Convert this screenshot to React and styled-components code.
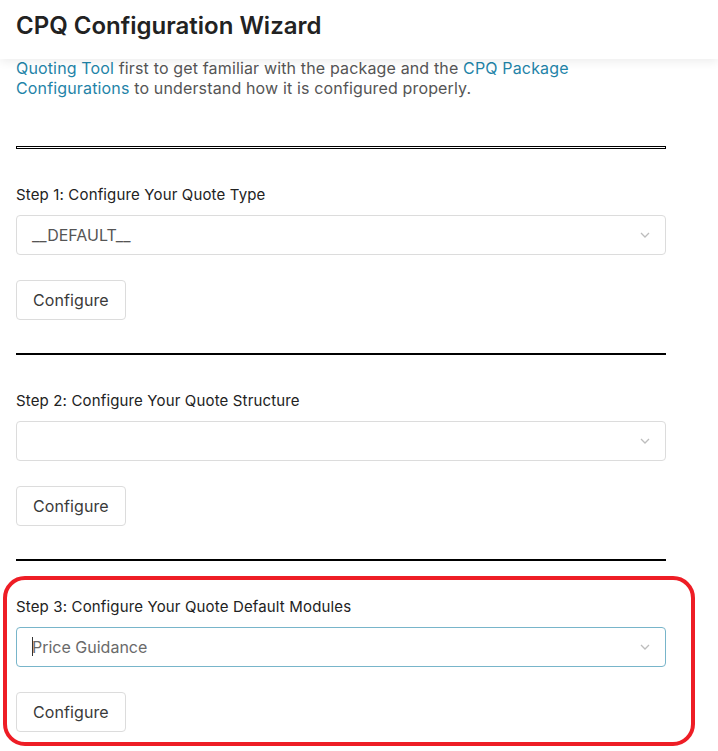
import React from "react";
import styled, { createGlobalStyle, css } from "styled-components";

const GlobalStyle = createGlobalStyle`
    body {
        margin: 0;
        background: #fff;
        font-family: 'Inter', 'Noto Sans', sans-serif;
    }
`

const Header = styled.header`
    position: sticky;
    top: 0;
    z-index: 2;
    height: 59px;
    padding: 11px 16px 0;
    box-sizing: border-box;
    background: #fff;
    box-shadow: 0 3px 9px rgba(0, 0, 0, 0.07);
    h1 {
        margin: 0;
        font-size: 24px;
        line-height: 30px;
        font-weight: 600;
        color: #222;
    }
`

const Page = styled.main`
    padding: 0 52px 20px 16px;
    margin-top: -1px;
`

const Intro = styled.p`
    margin: 0;
    font-size: 16px;
    line-height: 20px;
    letter-spacing: 0.15px;
    color: #555;
    a {
        color: #1f84a8;
        text-decoration: none;
    }
`

const Rule = styled.hr`
    margin: 0;
    border: none;
    ${(p) => p.double ? css`
        height: 1px;
        border: 1px solid #000;
        margin-top: 48px;
    ` : css`
        height: 0;
        border-top: 2px solid #000;
    `}
`

const Step = styled.section`
    position: relative;
    display: flex;
    flex-direction: column;
    align-items: flex-start;
    padding: 36px 0 33px;
    ${(p) => p.highlighted && css`
        &::after {
            content: '';
            position: absolute;
            top: 15px;
            left: -13px;
            right: -29px;
            bottom: 19px;
            border: 4px solid #ee1d25;
            border-radius: 22px;
            pointer-events: none;
        }
    `}
`

const Label = styled.div`
    font-size: 15px;
    line-height: 20px;
    letter-spacing: 0.15px;
    color: #222;
`

const SelectBox = styled.div`
    align-self: stretch;
    margin-top: 10px;
    height: 40px;
    box-sizing: border-box;
    padding: 0 15px 0 15px;
    display: flex;
    align-items: center;
    justify-content: space-between;
    border: 1px solid ${(p) => (p.focused ? "#78b5ca" : "#dcdcdc")};
    border-radius: 4px;
    font-size: 16px;
    color: ${(p) => (p.focused ? "#6a6a6a" : "#555")};
`

const Value = styled.span`
    position: relative;
    ${(p) => p.caret && css`
        &::before {
            content: '';
            position: absolute;
            left: 0;
            top: 0;
            width: 1px;
            height: 19px;
            background: #333;
        }
    `}
`

const Button = styled.button`
    margin-top: 25px;
    height: 40px;
    padding: 0 16px;
    background: #fff;
    border: 1px solid #dcdcdc;
    border-radius: 4px;
    font-family: inherit;
    font-size: 16px;
    font-weight: 400;
    letter-spacing: 0.1px;
    color: #3a3a3a;
`

const Chevron = () => (
    <svg width="10" height="6" viewBox="0 0 10 6">
        <path d="M1 1l4 4 4-4" fill="none" stroke="#bdbdbd" strokeWidth="1.3" />
    </svg>
)

const steps = [
    { label: "Step 1: Configure Your Quote Type", value: "__DEFAULT__" },
    { label: "Step 2: Configure Your Quote Structure", value: "" },
    { label: "Step 3: Configure Your Quote Default Modules", value: "Price Guidance", focused: true },
]

const App = () => {
    return (
        <>
            <GlobalStyle />
            <Header>
                <h1>CPQ Configuration Wizard</h1>
            </Header>
            <Page>
                <Intro>
                    <a href="#">Quoting Tool</a> first to get familiar with the package and the <a href="#">CPQ Package Configurations</a> to understand how it is configured properly.
                </Intro>
                <Rule double />
                {steps.map((s, i) => (
                    <React.Fragment key={s.label}>
                        {i > 0 && <Rule />}
                        <Step highlighted={s.focused}>
                            <Label>{s.label}</Label>
                            <SelectBox focused={s.focused}>
                                <Value caret={s.focused}>{s.value}</Value>
                                <Chevron />
                            </SelectBox>
                            <Button>Configure</Button>
                        </Step>
                    </React.Fragment>
                ))}
            </Page>
        </>
    )
}

export default App;
